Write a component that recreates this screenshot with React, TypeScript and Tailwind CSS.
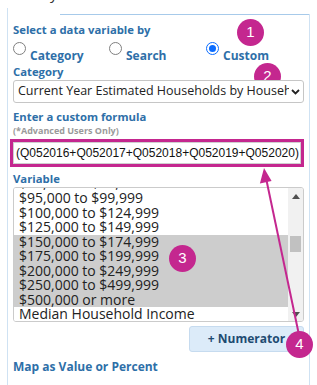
import React from "react";

const rows = [
  "$90,000 to $94,999",
  "$95,000 to $99,999",
  "$100,000 to $124,999",
  "$125,000 to $149,999",
  "$150,000 to $174,999",
  "$175,000 to $199,999",
  "$200,000 to $249,999",
  "$250,000 to $499,999",
  "$500,000 or more",
  "Median Household Income",
];
const selected = new Set([4, 5, 6, 7, 8]);

function Badge({ n, cls }: { n: string; cls: string }) {
  return (
    <div
      className={`absolute w-[27px] h-[27px] rounded-full bg-[#c4278f] text-white flex items-center justify-center text-[15px] font-['Liberation_Sans',Arial,sans-serif] ${cls}`}
    >
      {n}
    </div>
  );
}

function Radio({ checked }: { checked?: boolean }) {
  return checked ? (
    <span className="w-[13px] h-[13px] rounded-full border-[1.5px] border-[#0a6cff] flex items-center justify-center bg-white shrink-0">
      <span className="w-[7px] h-[7px] rounded-full bg-[#0a6cff]" />
    </span>
  ) : (
    <span className="w-[13px] h-[13px] rounded-full border border-[#808080] bg-white shrink-0" />
  );
}

export default function App() {
  return (
    <div className="relative w-[317px] h-[385px] overflow-hidden bg-white font-['Open_Sans',sans-serif]">
      <div className="h-[8px] overflow-hidden">
        <div className="-mt-[17px] pl-[50px] text-[15px] leading-[20px] text-[#333]">y</div>
      </div>
      <div className="ml-[7px] w-[303px] h-[377px] border-l border-[#cfe2f3]">
        <div className="h-[6px]" />
        <div className="h-[371px] border-r border-[#cfe2f3]">
          <div className="ml-[52px] border-t border-[#a7caea]" />
          <div className="pl-[5px] pr-[5px]">
            <div className="mt-[7px] text-[11.3px] leading-[16px] font-bold text-[#2e6fa8]">
              Select a data variable by
            </div>
            <div className="mt-[4px] flex text-[12px] leading-[16px] font-bold text-[#2e6fa8]">
              <div className="w-[96px] flex items-start">
                <Radio />
                <span className="ml-[4px] mt-[6px]">Category</span>
              </div>
              <div className="w-[97px] flex items-start">
                <Radio />
                <span className="ml-[4px] mt-[6px]">Search</span>
              </div>
              <div className="flex items-start">
                <Radio checked />
                <span className="ml-[4px] mt-[6px]">Custom</span>
              </div>
            </div>
            <div className="text-[11.3px] leading-[16px] font-bold text-[#2e6fa8]">Category</div>
            <div className="relative z-10 h-[23px] border border-[#c6c6c6] rounded-[3px] bg-white flex items-center pl-[4px] pr-[3px]">
              <div className="flex-1 overflow-hidden whitespace-nowrap text-[12.5px] text-[#222]">
                Current Year Estimated Households by Household Income
              </div>
              <svg width="9" height="6" viewBox="0 0 9 6" className="ml-[2px] shrink-0">
                <path d="M1 1 L4.5 4.5 L8 1" stroke="#222" strokeWidth="1.8" fill="none" />
              </svg>
            </div>
            <div className="mt-[6px] text-[11.3px] leading-[16px] font-bold text-[#2e6fa8]">
              Enter a custom formula
            </div>
            <div className="text-[9px] leading-[12px] font-bold text-[#9a9a9a]">(*Advanced Users Only)</div>
            <div className="mt-[2px] -ml-[3px] h-[28px] border-[3px] border-[#c4278f]">
              <div className="h-full border border-[#cfcfcf] flex items-center pl-[2px] text-[12px] text-[#111] font-['Liberation_Sans',Arial,sans-serif] whitespace-nowrap overflow-hidden">
                (Q052016+Q052017+Q052018+Q052019+Q052020)
              </div>
            </div>
            <div className="mt-[4px] text-[11.3px] leading-[16px] font-bold text-[#2e6fa8]">Variable</div>
            <div className="h-[135px] border border-[#cbcbcb] rounded-[3px] overflow-hidden flex">
              <div className="flex-1 overflow-hidden">
                <div className="-mt-[11.5px]">
                  {rows.map((r, i) => (
                    <div
                      key={i}
                      className={`h-[14.5px] pl-[5px] text-[14px] text-[#222] whitespace-nowrap ${
                        i === 0 ? "leading-[11px] overflow-hidden" : "leading-[14.5px]"
                      } ${selected.has(i) ? "bg-[#cdcdcd]" : "bg-white"}`}
                    >
                      {r}
                    </div>
                  ))}
                </div>
              </div>
              <div className="w-[15px] bg-[#f1f1f1] flex flex-col items-center">
                <svg width="8" height="5" viewBox="0 0 8 5" className="mt-[6px]">
                  <path d="M0 5 L4 0 L8 5 Z" fill="#505050" />
                </svg>
                <div className="mt-[37px] w-[11px] h-[16px] bg-[#c1c1c1]" />
                <div className="flex-1" />
                <svg width="8" height="5" viewBox="0 0 8 5" className="mb-[4px]">
                  <path d="M0 0 L8 0 L4 5 Z" fill="#505050" />
                </svg>
              </div>
            </div>
            <div className="mt-[4px] flex justify-end">
              <div className="w-[115px] h-[26px] bg-[#dcebf9] border border-[#c6dbef] rounded-[3px] flex items-center justify-center text-[12px] font-bold text-[#1e4b72]">
                + Numerator
              </div>
            </div>
            <div className="mt-[7px] text-[12px] leading-[16px] font-bold text-[#2e6fa8]">
              Map as Value or Percent
            </div>
          </div>
        </div>
      </div>

      <svg className="absolute left-0 top-0 pointer-events-none" width="317" height="385">
        <line x1="299" y1="335" x2="266" y2="178" stroke="#c4278f" strokeWidth="2" />
        <path d="M264 168 L271.6 181 L259.9 183.4 Z" fill="#c4278f" />
      </svg>
      <div className="absolute left-[237px] top-[19px] w-[27px] h-[27px] rounded-full bg-[#c4278f] text-white flex items-center justify-center text-[15px] font-['Liberation_Sans',Arial,sans-serif]">
        1
      </div>
      <div className="absolute left-[254px] top-[63px] z-0 w-[27px] h-[27px] rounded-full bg-[#c4278f] text-white flex items-center justify-center text-[15px] font-['Liberation_Sans',Arial,sans-serif]">
        2
      </div>
      <Badge n="3" cls="left-[169px] top-[245px]" />
      <Badge n="4" cls="left-[286px] top-[331px]" />
    </div>
  );
}
